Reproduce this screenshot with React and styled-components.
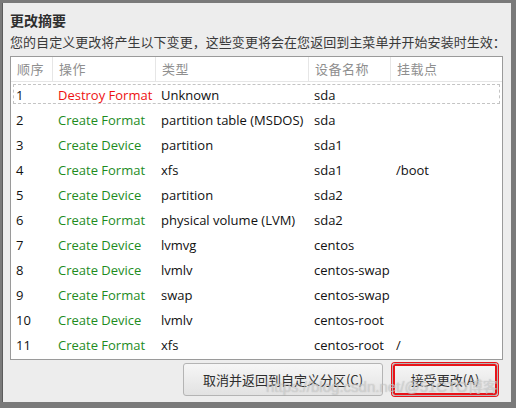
import React from "react"
import styled, { createGlobalStyle } from "styled-components"

const GlobalStyle = createGlobalStyle`
  html, body {
    margin: 0;
    padding: 0;
    background: #7a7a7a;
    font-family: "Open Sans", "Noto Sans CJK SC", sans-serif;
  }
`

const Screen = styled.div`
  width: 516px;
  height: 408px;
  overflow: hidden;
  position: relative;
  background: #7a7a7a;
  padding-top: 3px;
  box-sizing: border-box;
`

const Dialog = styled.div`
  margin-left: 2px;
  width: 509px;
  height: 399px;
  box-sizing: border-box;
  background: #ededed;
  border-left: 1px solid #5c5c5c;
  padding: 7px 8px 0 7px;
  display: flex;
  flex-direction: column;
`

const Title = styled.h1`
  margin: 0;
  font-family: "Noto Sans CJK SC", sans-serif;
  font-size: 14px;
  font-weight: bold;
  line-height: 20px;
  color: #2e2e2e;
`

const Subtitle = styled.p`
  margin: 2px 0 0;
  font-family: "Noto Sans CJK SC", sans-serif;
  font-size: 13px;
  line-height: 20px;
  color: #3a3a3a;
  letter-spacing: 0.05px;
  white-space: nowrap;
`

const Table = styled.div`
  margin-top: 4px;
  width: 493px;
  height: 304px;
  box-sizing: border-box;
  background: #fff;
  border: 1px solid #9a9a9a;
  display: flex;
  flex-direction: column;
`

const cols = "42px 103px 153px 82px 1fr"

const HeadRow = styled.div`
  display: grid;
  grid-template-columns: ${cols};
  height: 24px;
  border-bottom: 1px solid #e6e6e6;
`

const HeadCell = styled.div`
  padding-left: 6px;
  line-height: 24px;
  font-family: "Noto Sans CJK SC", sans-serif;
  font-size: 13px;
  color: #8f8f8f;
  letter-spacing: 0.5px;
  border-right: ${p => (p.$last ? "none" : "1px solid #e6e6e6")};
`

const Body = styled.div`
  padding-top: 1px;
`

const Row = styled.div`
  position: relative;
  display: grid;
  grid-template-columns: ${cols};
  height: 25px;
  line-height: 24px;
  font-size: 13px;
  color: #111;

  &::before {
    content: "";
    display: ${p => (p.$focus ? "block" : "none")};
    position: absolute;
    left: 2px;
    right: 2px;
    top: 1px;
    height: 18px;
    border: 1px dashed #c4c4c4;
  }
`

const Cell = styled.div`
  padding-left: 5px;
  white-space: nowrap;
  color: ${p => p.$color || "#111"};
`

const Footer = styled.div`
  display: flex;
  justify-content: flex-end;
  gap: 9px;
  margin-top: 3px;
  padding-right: 5px;
`

const Button = styled.button`
  height: 33px;
  width: ${p => p.$width}px;
  box-sizing: border-box;
  border: 1px solid #b4b4b4;
  border-radius: 3px;
  background: linear-gradient(#f6f6f6, #e2e2e2);
  font-family: "Noto Sans CJK SC", sans-serif;
  font-size: 13px;
  color: #2e2e2e;
  padding: 0;
  box-shadow: ${p => (p.$marked ? "0 0 0 2px #e8141a inset, 0 0 0 1px #e8141a" : "none")};
`

const Watermark = styled.div`
  position: absolute;
  left: 266px;
  top: 375px;
  font-family: "Liberation Sans", "Noto Sans CJK SC", sans-serif;
  font-size: 15px;
  color: rgba(230, 230, 230, 0.55);
  text-shadow: 0 0 1px rgba(120, 120, 120, 0.5);
  pointer-events: none;
  white-space: nowrap;
`

const RED = "#ee1111"
const GREEN = "#1e8c1e"

const rows = [
  ["1", "Destroy Format", "Unknown", "sda", ""],
  ["2", "Create Format", "partition table (MSDOS)", "sda", ""],
  ["3", "Create Device", "partition", "sda1", ""],
  ["4", "Create Format", "xfs", "sda1", "/boot"],
  ["5", "Create Device", "partition", "sda2", ""],
  ["6", "Create Format", "physical volume (LVM)", "sda2", ""],
  ["7", "Create Device", "lvmvg", "centos", ""],
  ["8", "Create Device", "lvmlv", "centos-swap", ""],
  ["9", "Create Format", "swap", "centos-swap", ""],
  ["10", "Create Device", "lvmlv", "centos-root", ""],
  ["11", "Create Format", "xfs", "centos-root", "/"],
]

const App = () => {
  return (
    <Screen>
      <GlobalStyle />
      <Dialog>
        <Title>更改摘要</Title>
        <Subtitle>您的自定义更改将产生以下变更，这些变更将会在您返回到主菜单并开始安装时生效：</Subtitle>
        <Table>
          <HeadRow>
            <HeadCell>顺序</HeadCell>
            <HeadCell>操作</HeadCell>
            <HeadCell>类型</HeadCell>
            <HeadCell>设备名称</HeadCell>
            <HeadCell $last>挂载点</HeadCell>
          </HeadRow>
          <Body>
            {rows.map((r, i) => (
              <Row key={r[0]} $focus={i === 0}>
                <Cell>{r[0]}</Cell>
                <Cell $color={r[1].startsWith("Destroy") ? RED : GREEN}>{r[1]}</Cell>
                <Cell>{r[2]}</Cell>
                <Cell>{r[3]}</Cell>
                <Cell>{r[4]}</Cell>
              </Row>
            ))}
          </Body>
        </Table>
        <Footer>
          <Button $width={200}>取消并返回到自定义分区(C)</Button>
          <Button $width={106} $marked>接受更改(A)</Button>
        </Footer>
      </Dialog>
      <Watermark>https://blog.csdn.net/@51CTO博客</Watermark>
    </Screen>
  )
}

export default App
